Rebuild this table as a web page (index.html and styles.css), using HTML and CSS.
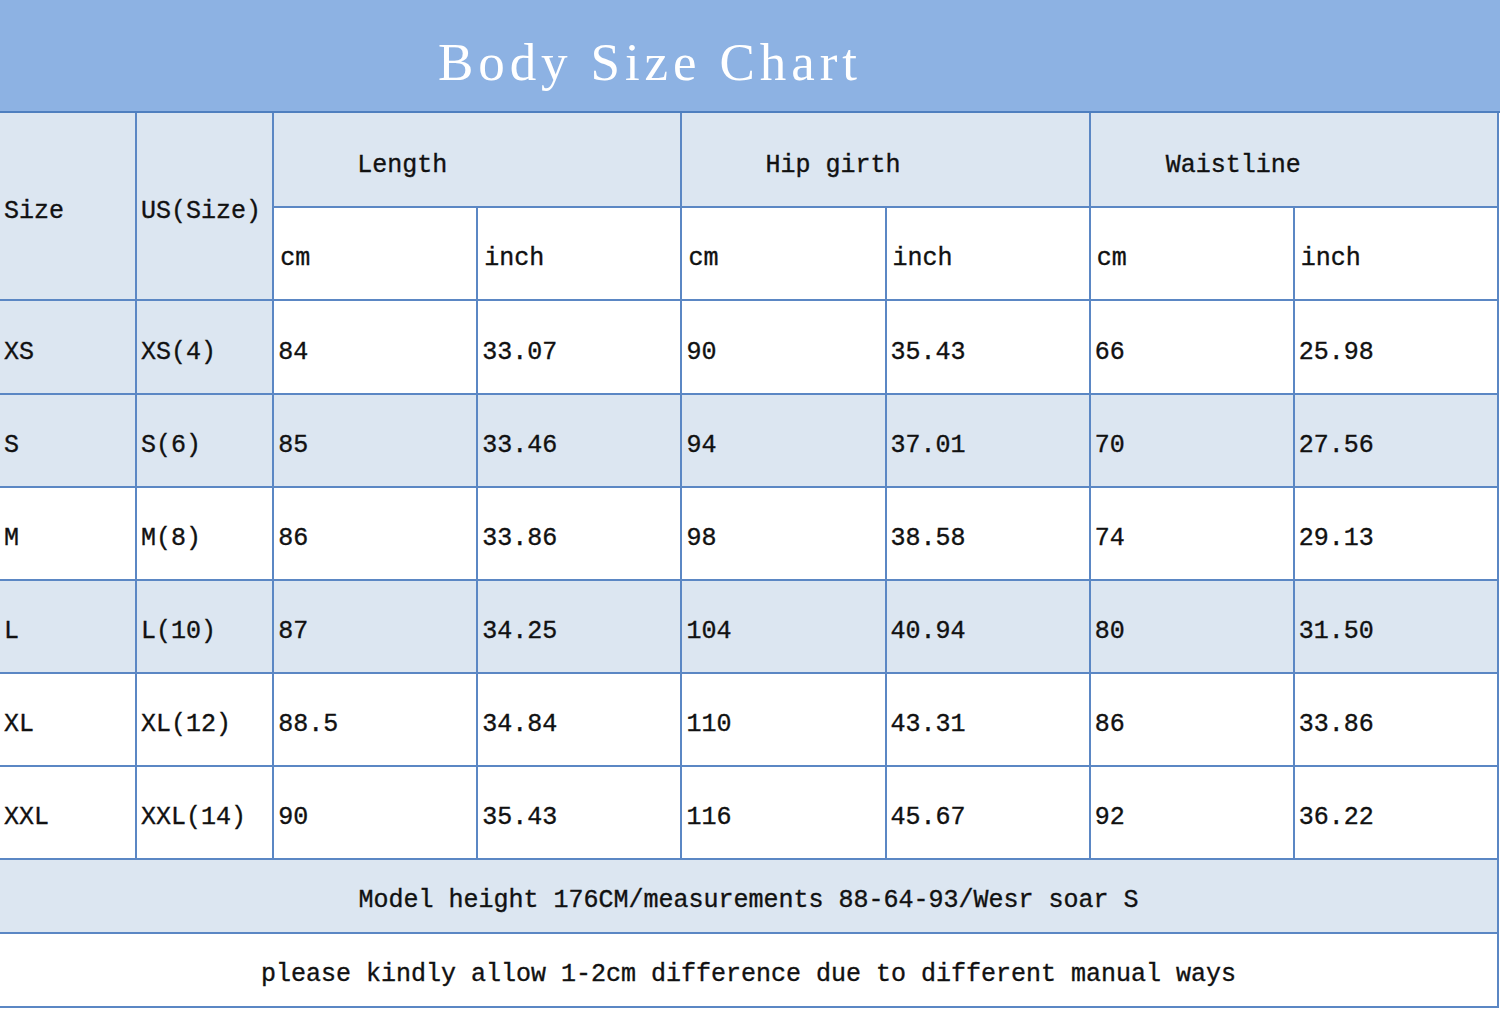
FILE: index.html
```html
<!DOCTYPE html>
<html lang="en">
<head>
<meta charset="utf-8">
<title>Body Size Chart</title>
<link rel="stylesheet" href="styles.css">
</head>
<body>
<div class="banner"><h1 class="title">Body Size Chart</h1></div>
<table class="chart">
  <colgroup>
    <col class="c-size"><col class="c-us">
    <col class="c-val"><col class="c-val"><col class="c-val"><col class="c-val"><col class="c-val"><col class="c-val">
  </colgroup>
  <tbody>
    <tr class="head">
      <td rowspan="2" class="tint">Size</td>
      <td rowspan="2" class="tint">US(Size)</td>
      <td colspan="2" class="tint group">Length</td>
      <td colspan="2" class="tint group">Hip girth</td>
      <td colspan="2" class="tint group group-w">Waistline</td>
    </tr>
    <tr class="sub">
      <td>cm</td><td>inch</td><td>cm</td><td>inch</td><td>cm</td><td>inch</td>
    </tr>
    <tr class="row row-first">
      <td class="tint">XS</td><td class="tint">XS(4)</td>
      <td>84</td><td>33.07</td><td>90</td><td>35.43</td><td>66</td><td>25.98</td>
    </tr>
    <tr class="row tint">
      <td>S</td><td>S(6)</td>
      <td>85</td><td>33.46</td><td>94</td><td>37.01</td><td>70</td><td>27.56</td>
    </tr>
    <tr class="row">
      <td>M</td><td>M(8)</td>
      <td>86</td><td>33.86</td><td>98</td><td>38.58</td><td>74</td><td>29.13</td>
    </tr>
    <tr class="row tint">
      <td>L</td><td>L(10)</td>
      <td>87</td><td>34.25</td><td>104</td><td>40.94</td><td>80</td><td>31.50</td>
    </tr>
    <tr class="row">
      <td>XL</td><td>XL(12)</td>
      <td>88.5</td><td>34.84</td><td>110</td><td>43.31</td><td>86</td><td>33.86</td>
    </tr>
    <tr class="row">
      <td>XXL</td><td>XXL(14)</td>
      <td>90</td><td>35.43</td><td>116</td><td>45.67</td><td>92</td><td>36.22</td>
    </tr>
    <tr class="note tint">
      <td colspan="8">Model height 176CM/measurements 88-64-93/Wesr soar S</td>
    </tr>
    <tr class="note">
      <td colspan="8">please kindly allow 1-2cm difference due to different manual ways</td>
    </tr>
  </tbody>
</table>
</body>
</html>
```

FILE: styles.css
```css
html, body {
  margin: 0;
  padding: 0;
  background: #ffffff;
}

body {
  width: 1500px;
  height: 1010px;
  overflow: hidden;
  font-family: "Liberation Mono", "DejaVu Sans Mono", monospace;
  color: #111111;
}

.banner {
  height: 113px;
  background: #8db2e3;
  border-bottom: 2px solid #4f7fbf;
  display: flex;
  align-items: center;
  box-sizing: border-box;
  padding: 14px 0 0 438px;
}

.title {
  margin: 0;
  font-family: "Liberation Serif", "DejaVu Serif", serif;
  font-weight: normal;
  font-size: 53px;
  letter-spacing: 4.9px;
  color: #ffffff;
  line-height: 1;
}

.chart {
  border-collapse: collapse;
  table-layout: fixed;
  width: 1499px;
  font-size: 25px;
  line-height: 1;
  border-right: 2px solid #5b87c4;
  border-bottom: 2px solid #5b87c4;
  -webkit-text-stroke: 0.35px #111111;
}

.c-size { width: 136px; }
.c-us { width: 137px; }
.c-val { width: 204px; }

.chart td {
  border: 2px solid #5b87c4;
  padding: 0 0 0 4px;
  vertical-align: middle;
  white-space: nowrap;
  background: #ffffff;
}

.chart tr > td:first-child {
  border-left: none;
}

.chart tr:first-child td {
  border-top: none;
}

.chart td.tint,
.chart tr.tint td {
  background: #dce6f1;
}

.chart .head td { height: 93px; }
.chart .head td[rowspan] { padding-top: 10px; }
.chart .head td.group { padding-left: 83px; padding-top: 12px; height: 81px; }
.chart .head td.group-w { padding-left: 75px; }

.chart .sub td { height: 81px; padding-left: 6px; padding-top: 10px; }

.chart .row td { height: 81px; padding-top: 10px; }
.chart .row-first td { height: 82px; }

.chart .note td {
  height: 64px;
  text-align: center;
  padding: 8px 0 0 0;
}
```
